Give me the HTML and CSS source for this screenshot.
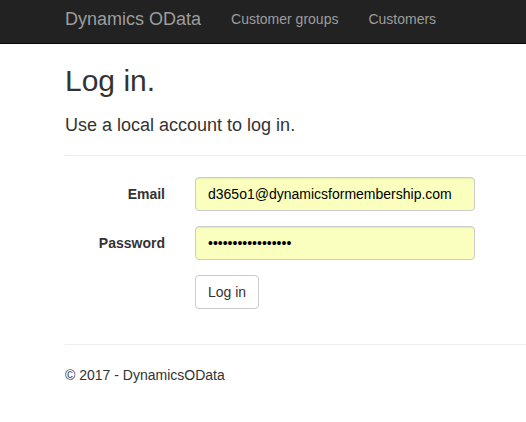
FILE: index.html
```html
<!DOCTYPE html>
<html>
<head>
<meta charset="utf-8">
<title>Log in</title>
<link rel="stylesheet" href="styles.css">
</head>
<body>
<nav class="navbar">
  <div class="nav-inner">
    <a class="brand" href="#">Dynamics OData</a>
    <a class="nav-link" href="#">Customer groups</a>
    <a class="nav-link" href="#">Customers</a>
  </div>
</nav>
<main class="content">
  <h2 class="title">Log in.</h2>
  <h4 class="subtitle">Use a local account to log in.</h4>
  <hr class="rule">
  <form class="form">
    <div class="form-group">
      <label class="control-label" for="email">Email</label>
      <input class="form-control" id="email" type="text" value="d365o1@dynamicsformembership.com">
    </div>
    <div class="form-group">
      <label class="control-label" for="pw">Password</label>
      <input class="form-control" id="pw" type="password" value="aaaaaaaaaaaaaaaaa">
    </div>
    <div class="form-group">
      <span class="control-label"></span>
      <button class="btn" type="button">Log in</button>
    </div>
  </form>
  <hr class="rule footer-rule">
  <footer class="footer">
    <p>&copy; 2017 - DynamicsOData</p>
  </footer>
</main>
</body>
</html>
```

FILE: styles.css
```css
html, body {
  margin: 0;
  padding: 0;
  overflow: hidden;
}
body {
  font-family: "Liberation Sans", Arial, sans-serif;
  font-size: 14px;
  line-height: 20px;
  color: #333;
  background: #fff;
}
.navbar {
  background: #222;
  border-bottom: 1px solid #080808;
  height: 43px;
}
.nav-inner {
  display: flex;
  padding-left: 50px;
}
.brand {
  display: block;
  font-size: 18px;
  line-height: 20px;
  padding: 9px 15px 14px;
  color: #9d9d9d;
  text-decoration: none;
}
.nav-link {
  display: block;
  font-size: 14px;
  line-height: 20px;
  padding: 9px 15px 14px;
  color: #9d9d9d;
  text-decoration: none;
}
.content {
  padding-left: 65px;
}
.title {
  font-size: 30px;
  font-weight: 500;
  line-height: 33px;
  margin: 20px 0 0;
}
.subtitle {
  font-size: 18px;
  font-weight: 500;
  line-height: 20px;
  margin: 18px 0 0;
}
.rule {
  border: 0;
  border-top: 1px solid #eee;
  margin: 20px 0 20px;
  height: 0;
}
.form {
  padding-top: 1px;
}
.form-group {
  display: flex;
  margin-bottom: 15px;
}
.control-label {
  width: 100px;
  padding-right: 30px;
  padding-top: 7px;
  text-align: right;
  font-weight: bold;
  flex-shrink: 0;
}
.form-control {
  box-sizing: border-box;
  width: 280px;
  height: 34px;
  padding: 6px 12px;
  font-family: "Liberation Sans", Arial, sans-serif;
  font-size: 14px;
  color: #000;
  background: #faffbd;
  border: 1px solid #ccc;
  border-radius: 4px;
  box-shadow: inset 0 1px 1px rgba(0,0,0,.075);
  margin: 0;
}
.btn {
  box-sizing: border-box;
  height: 34px;
  padding: 6px 12px;
  font-family: "Liberation Sans", Arial, sans-serif;
  font-size: 14px;
  line-height: 20px;
  color: #333;
  background: #fff;
  border: 1px solid #ccc;
  border-radius: 4px;
  margin: 0;
}
.footer-rule {
  margin-top: 35px;
}
.footer p {
  margin: 0;
}
```
